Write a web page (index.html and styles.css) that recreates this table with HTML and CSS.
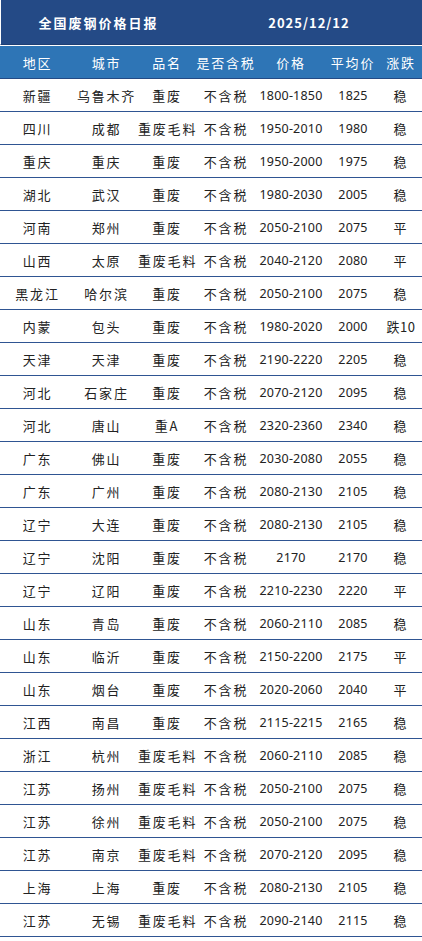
FILE: index.html
```html
<!DOCTYPE html>
<html lang="zh-CN">
<head>
<meta charset="utf-8">
<title>全国废钢价格日报</title>
<link rel="stylesheet" href="styles.css">
</head>
<body>
<div class="sheet">
  <div class="title-bar">
    <div class="title">全国废钢价格日报</div>
    <div class="date">2025/12/12</div>
  </div>
  <div class="row head">
    <div>地区</div><div>城市</div><div>品名</div><div>是否含税</div><div>价格</div><div>平均价</div><div>涨跌</div>
  </div>
  <div class="row"><div>新疆</div><div>乌鲁木齐</div><div>重废</div><div>不含税</div><div class="num">1800-1850</div><div class="num">1825</div><div>稳</div></div>
  <div class="row"><div>四川</div><div>成都</div><div>重废毛料</div><div>不含税</div><div class="num">1950-2010</div><div class="num">1980</div><div>稳</div></div>
  <div class="row"><div>重庆</div><div>重庆</div><div>重废</div><div>不含税</div><div class="num">1950-2000</div><div class="num">1975</div><div>稳</div></div>
  <div class="row"><div>湖北</div><div>武汉</div><div>重废</div><div>不含税</div><div class="num">1980-2030</div><div class="num">2005</div><div>稳</div></div>
  <div class="row"><div>河南</div><div>郑州</div><div>重废</div><div>不含税</div><div class="num">2050-2100</div><div class="num">2075</div><div>平</div></div>
  <div class="row"><div>山西</div><div>太原</div><div>重废毛料</div><div>不含税</div><div class="num">2040-2120</div><div class="num">2080</div><div>平</div></div>
  <div class="row"><div>黑龙江</div><div>哈尔滨</div><div>重废</div><div>不含税</div><div class="num">2050-2100</div><div class="num">2075</div><div>稳</div></div>
  <div class="row"><div>内蒙</div><div>包头</div><div>重废</div><div>不含税</div><div class="num">1980-2020</div><div class="num">2000</div><div class="chg">跌10</div></div>
  <div class="row"><div>天津</div><div>天津</div><div>重废</div><div>不含税</div><div class="num">2190-2220</div><div class="num">2205</div><div>稳</div></div>
  <div class="row"><div>河北</div><div>石家庄</div><div>重废</div><div>不含税</div><div class="num">2070-2120</div><div class="num">2095</div><div>稳</div></div>
  <div class="row"><div>河北</div><div>唐山</div><div>重A</div><div>不含税</div><div class="num">2320-2360</div><div class="num">2340</div><div>稳</div></div>
  <div class="row"><div>广东</div><div>佛山</div><div>重废</div><div>不含税</div><div class="num">2030-2080</div><div class="num">2055</div><div>稳</div></div>
  <div class="row"><div>广东</div><div>广州</div><div>重废</div><div>不含税</div><div class="num">2080-2130</div><div class="num">2105</div><div>稳</div></div>
  <div class="row"><div>辽宁</div><div>大连</div><div>重废</div><div>不含税</div><div class="num">2080-2130</div><div class="num">2105</div><div>稳</div></div>
  <div class="row"><div>辽宁</div><div>沈阳</div><div>重废</div><div>不含税</div><div class="num">2170</div><div class="num">2170</div><div>稳</div></div>
  <div class="row"><div>辽宁</div><div>辽阳</div><div>重废</div><div>不含税</div><div class="num">2210-2230</div><div class="num">2220</div><div>平</div></div>
  <div class="row"><div>山东</div><div>青岛</div><div>重废</div><div>不含税</div><div class="num">2060-2110</div><div class="num">2085</div><div>稳</div></div>
  <div class="row"><div>山东</div><div>临沂</div><div>重废</div><div>不含税</div><div class="num">2150-2200</div><div class="num">2175</div><div>平</div></div>
  <div class="row"><div>山东</div><div>烟台</div><div>重废</div><div>不含税</div><div class="num">2020-2060</div><div class="num">2040</div><div>平</div></div>
  <div class="row"><div>江西</div><div>南昌</div><div>重废</div><div>不含税</div><div class="num">2115-2215</div><div class="num">2165</div><div>稳</div></div>
  <div class="row"><div>浙江</div><div>杭州</div><div>重废毛料</div><div>不含税</div><div class="num">2060-2110</div><div class="num">2085</div><div>稳</div></div>
  <div class="row"><div>江苏</div><div>扬州</div><div>重废毛料</div><div>不含税</div><div class="num">2050-2100</div><div class="num">2075</div><div>稳</div></div>
  <div class="row"><div>江苏</div><div>徐州</div><div>重废毛料</div><div>不含税</div><div class="num">2050-2100</div><div class="num">2075</div><div>稳</div></div>
  <div class="row"><div>江苏</div><div>南京</div><div>重废毛料</div><div>不含税</div><div class="num">2070-2120</div><div class="num">2095</div><div>稳</div></div>
  <div class="row"><div>上海</div><div>上海</div><div>重废</div><div>不含税</div><div class="num">2080-2130</div><div class="num">2105</div><div>稳</div></div>
  <div class="row"><div>江苏</div><div>无锡</div><div>重废毛料</div><div>不含税</div><div class="num">2090-2140</div><div class="num">2115</div><div>稳</div></div>
</div>
</body>
</html>
```

FILE: styles.css
```css
html, body {
  margin: 0;
  padding: 0;
  background: #ffffff;
}

.sheet {
  width: 422px;
  font-family: "Noto Sans CJK SC", "Noto Sans", sans-serif;
  font-size: 13px;
  color: #222222;
}

.title-bar {
  display: grid;
  grid-template-columns: 195px 226px;
  height: 45px;
  background: #244a86;
  border-left: 1px solid #ffffff;
  border-bottom: 1px solid #1f3f73;
  box-sizing: border-box;
  align-items: center;
  color: #ffffff;
  font-weight: bold;
}

.title {
  text-align: center;
  letter-spacing: 2px;
  font-size: 13px;
}

.date {
  text-align: center;
  letter-spacing: 1px;
  font-size: 13px;
}

.row {
  display: grid;
  grid-template-columns: 75px 63px 58px 60px 70px 54px 42px;
  height: 33px;
  box-sizing: border-box;
  border-bottom: 1px solid #2f5592;
  align-items: center;
}

.row > div {
  text-align: center;
  letter-spacing: 1.8px;
  white-space: nowrap;
}

.row > .num {
  font-family: "Noto Sans", "Noto Sans CJK SC", sans-serif;
  font-size: 12.5px;
  letter-spacing: 0.2px;
}

.row > .chg {
  letter-spacing: 0.5px;
}

.row.head {
  margin-top: 1px;
  height: 33px;
  background: #2e75b6;
  color: #ffffff;
  border-bottom: 1px solid #234a85;
}
```
